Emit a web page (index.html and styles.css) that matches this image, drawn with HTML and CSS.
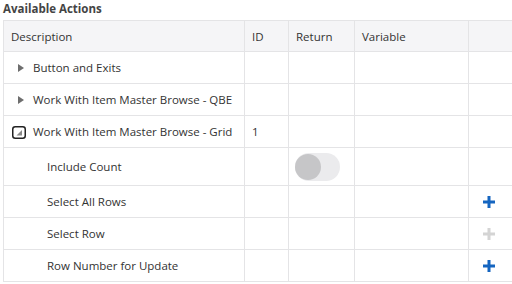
FILE: index.html
```html
<!DOCTYPE html>
<html>
<head>
<meta charset="utf-8">
<link rel="stylesheet" href="styles.css">
</head>
<body>
<div class="panel">
  <h2 class="title">Available Actions</h2>
  <div class="clip">
  <table class="grid">
    <colgroup>
      <col class="c-desc"><col class="c-id"><col class="c-ret"><col class="c-var"><col class="c-act">
    </colgroup>
    <thead>
      <tr><th>Description</th><th>ID</th><th>Return</th><th>Variable</th><th></th></tr>
    </thead>
    <tbody>
      <tr><td><span class="node"><span class="tri"></span>Button and Exits</span></td><td></td><td></td><td></td><td></td></tr>
      <tr><td><span class="node"><span class="tri"></span>Work With Item Master Browse - QBE</span></td><td></td><td></td><td></td><td></td></tr>
      <tr><td><span class="node"><svg class="exp" width="14" height="13" viewBox="0 0 14 13"><rect x="0.75" y="0.75" width="12.5" height="11.5" rx="2.5" fill="#fff" stroke="#222" stroke-width="1.5"/><path d="M10 4 L10 9.5 L4.5 9.5 Z" fill="#888"/></svg>Work With Item Master Browse - Grid</span></td><td>1</td><td></td><td></td><td></td></tr>
      <tr class="tall"><td class="sub">Include Count</td><td></td><td><span class="toggle"><span class="knob"></span></span></td><td></td><td></td></tr>
      <tr><td class="sub">Select All Rows</td><td></td><td></td><td></td><td class="act"><svg class="plus" width="12" height="12" viewBox="0 0 12 12"><path d="M4.5 0h3v4.5H12v3H7.5V12h-3V7.5H0v-3h4.5z" fill="#1565c0"/></svg></td></tr>
      <tr><td class="sub">Select Row</td><td></td><td></td><td></td><td class="act"><svg class="plus" width="12" height="12" viewBox="0 0 12 12"><path d="M4.5 0h3v4.5H12v3H7.5V12h-3V7.5H0v-3h4.5z" fill="#d4d4d4"/></svg></td></tr>
      <tr><td class="sub">Row Number for Update</td><td></td><td></td><td></td><td class="act"><svg class="plus" width="12" height="12" viewBox="0 0 12 12"><path d="M4.5 0h3v4.5H12v3H7.5V12h-3V7.5H0v-3h4.5z" fill="#1565c0"/></svg></td></tr>
    </tbody>
  </table>
  </div>
</div>
</body>
</html>
```

FILE: styles.css
```css
html, body {
  margin: 0;
  padding: 0;
  background: #fff;
  overflow: hidden;
}
body {
  font-family: "Open Sans", "Noto Sans", sans-serif;
  color: #333;
}
.panel {
  padding: 1px 0 0 3px;
}
.clip {
  width: 509px;
  overflow: hidden;
}
.title {
  margin: 0;
  font-size: 11.5px;
  font-weight: 700;
  color: #444;
  line-height: 16px;
  height: 19px;
}
.grid {
  border-collapse: collapse;
  table-layout: fixed;
  width: 537px;
  font-size: 11.5px;
}
.c-desc { width: 241px; }
.c-id { width: 44px; }
.c-ret { width: 66px; }
.c-var { width: 114px; }
.c-act { width: 72px; }
.grid th, .grid td {
  border: 1px solid #e4e4e6;
  padding: 0 0 0 7px;
  height: 31px;
  text-align: left;
  white-space: nowrap;
  overflow: hidden;
  vertical-align: middle;
}
.grid th {
  background: #f5f5f7;
  font-weight: 400;
  color: #333;
  height: 30px;
}
.grid tr.tall td { height: 37px; }
.node {
  display: flex;
  align-items: center;
  padding-left: 1px;
}
.tri {
  flex-shrink: 0;
  width: 0;
  height: 0;
  border-left: 6px solid #6e6e6e;
  border-top: 4.5px solid transparent;
  border-bottom: 4.5px solid transparent;
  margin: 0 9px 0 6px;
}
.exp {
  flex-shrink: 0;
  display: block;
  margin: 1px 7px 0 0;
}
.sub { padding-left: 43px !important; }
.toggle {
  display: block;
  position: relative;
  width: 45px;
  height: 28px;
  border-radius: 14px;
  background: #ebebed;
  margin-left: -1px;
}
.knob {
  position: absolute;
  left: 0;
  top: 1px;
  width: 26px;
  height: 26px;
  border-radius: 50%;
  background: #c6c6c8;
}
.act { padding-left: 14px !important; }
.plus { display: block; }
```
